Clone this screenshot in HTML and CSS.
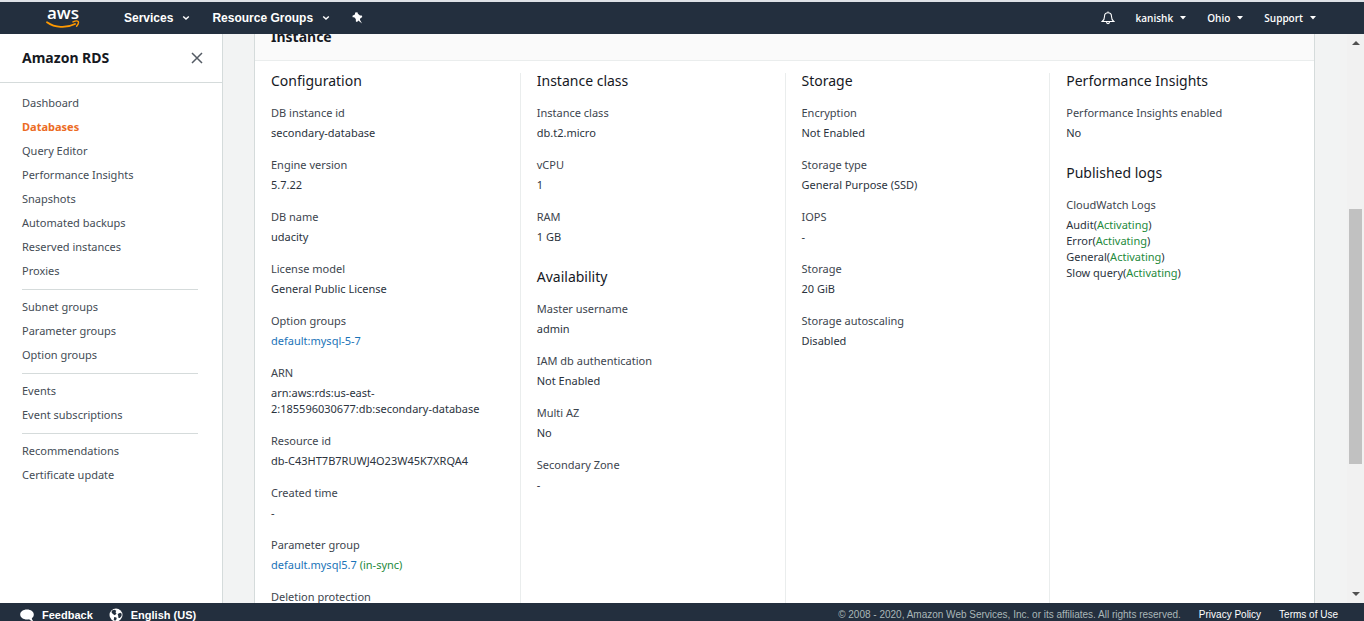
FILE: index.html
```html
<!DOCTYPE html>
<html lang="en">
<head>
<meta charset="utf-8">
<title>Amazon RDS</title>
<link rel="stylesheet" href="styles.css">
</head>
<body>
<header class="topbar">
  <a class="logo" href="#" aria-label="AWS home">
    <span class="logo-word">aws</span>
    <svg class="logo-smile" width="34" height="9" viewBox="0 0 34 9" fill="none" stroke="#f90" stroke-linecap="round" aria-hidden="true">
      <path d="M1 2.200C9 7.800 20 8.500 29 4" stroke-width="1.800"/>
      <path d="M27 1.900C29 1 31.600 .8 32.200 1.500S32 4.500 30.600 6.300" stroke-width="1.400"/>
    </svg>
  </a>
  <nav class="primary">
    <button type="button">Services <svg class="chev" viewBox="0 0 8 6"><path d="M1.200 1.500L4 4l2.800-2.500" fill="none" stroke="currentColor" stroke-width="1.500"/></svg></button>
    <button type="button">Resource Groups <svg class="chev" viewBox="0 0 8 6"><path d="M1.200 1.500L4 4l2.800-2.500" fill="none" stroke="currentColor" stroke-width="1.500"/></svg></button>
    <button type="button" aria-label="Pin shortcuts"><svg width="11" height="12" viewBox="0 0 11 12" fill="#fff"><path d="M3.200.6L5.400.3l.5 1.500L8 3.600l1.800-.2.500 1.500L8.200 6.500l-.3 1.200L10 11.400 6.300 8.600 5.100 10l-1.200-.4-.1-2.500L2.200 5.300.6 5.200.5 3.800l2.400-1.200z"/></svg></button>
  </nav>
  <nav class="secondary">
    <button type="button" aria-label="Notifications"><svg width="14" height="14" viewBox="0 0 14 14" fill="none" stroke="#fff" stroke-width="1.100"><path d="M7 .5v1.300M1.200 10.500h11.600C11 9 10.500 7.800 10.500 5.400 10.500 3 9.200 1.800 7 1.800S3.500 3 3.500 5.400C3.500 7.800 3 9 1.200 10.500zM5.500 10.800c0 2.400 3 2.400 3 0"/></svg></button>
    <button type="button">kanishk <svg class="tri" viewBox="0 0 6 4"><path d="M0 0h6L3 3.500z" fill="currentColor"/></svg></button>
    <button type="button">Ohio <svg class="tri" viewBox="0 0 6 4"><path d="M0 0h6L3 3.500z" fill="currentColor"/></svg></button>
    <button type="button">Support <svg class="tri" viewBox="0 0 6 4"><path d="M0 0h6L3 3.500z" fill="currentColor"/></svg></button>
  </nav>
</header>

<div class="workspace">
  <aside class="sidebar">
    <div class="sidebar-head">
      <h1>Amazon RDS</h1>
      <button type="button" aria-label="Close navigation"><svg width="12" height="12" viewBox="0 0 12 12" stroke="#545b64" stroke-width="1.500"><path d="M1 1l10 10M11 1L1 11"/></svg></button>
    </div>
    <nav class="side-links">
      <a href="#">Dashboard</a>
      <a href="#" class="active">Databases</a>
      <a href="#">Query Editor</a>
      <a href="#">Performance Insights</a>
      <a href="#">Snapshots</a>
      <a href="#">Automated backups</a>
      <a href="#">Reserved instances</a>
      <a href="#">Proxies</a>
      <hr>
      <a href="#">Subnet groups</a>
      <a href="#">Parameter groups</a>
      <a href="#">Option groups</a>
      <hr>
      <a href="#">Events</a>
      <a href="#">Event subscriptions</a>
      <hr>
      <a href="#">Recommendations</a>
      <a href="#">Certificate update</a>
    </nav>
  </aside>

  <main class="content">
    <section class="panel">
      <h2 class="panel-title">Instance</h2>
      <div class="columns">
        <div class="column">
          <h3>Configuration</h3>
          <dl>
            <dt>DB instance id</dt><dd>secondary-database</dd>
            <dt>Engine version</dt><dd>5.7.22</dd>
            <dt>DB name</dt><dd>udacity</dd>
            <dt>License model</dt><dd>General Public License</dd>
            <dt>Option groups</dt><dd><a href="#">default:mysql-5-7</a></dd>
            <dt>ARN</dt><dd>arn:aws:rds:us-east-<br>2:185596030677:db:secondary-database</dd>
            <dt>Resource id</dt><dd>db-C43HT7B7RUWJ4O23W45K7XRQA4</dd>
            <dt>Created time</dt><dd>-</dd>
            <dt>Parameter group</dt><dd><a href="#">default.mysql5.7</a> <span class="ok">(in-sync)</span></dd>
            <dt>Deletion protection</dt>
          </dl>
        </div>
        <div class="column">
          <h3>Instance class</h3>
          <dl>
            <dt>Instance class</dt><dd>db.t2.micro</dd>
            <dt>vCPU</dt><dd>1</dd>
            <dt>RAM</dt><dd>1 GB</dd>
          </dl>
          <h3>Availability</h3>
          <dl>
            <dt>Master username</dt><dd>admin</dd>
            <dt>IAM db authentication</dt><dd>Not Enabled</dd>
            <dt>Multi AZ</dt><dd>No</dd>
            <dt>Secondary Zone</dt><dd>-</dd>
          </dl>
        </div>
        <div class="column">
          <h3>Storage</h3>
          <dl>
            <dt>Encryption</dt><dd>Not Enabled</dd>
            <dt>Storage type</dt><dd>General Purpose (SSD)</dd>
            <dt>IOPS</dt><dd>-</dd>
            <dt>Storage</dt><dd>20 GiB</dd>
            <dt>Storage autoscaling</dt><dd>Disabled</dd>
          </dl>
        </div>
        <div class="column">
          <h3>Performance Insights</h3>
          <dl>
            <dt>Performance Insights enabled</dt><dd>No</dd>
          </dl>
          <h3>Published logs</h3>
          <dl>
            <dt>CloudWatch Logs</dt>
            <dd>Audit(<span class="ok">Activating</span>)<br>Error(<span class="ok">Activating</span>)<br>General(<span class="ok">Activating</span>)<br>Slow query(<span class="ok">Activating</span>)</dd>
          </dl>
        </div>
      </div>
    </section>
  </main>

  <div class="scrollbar" aria-hidden="true">
    <svg width="8" height="4" viewBox="0 0 8 4"><path d="M0 4h8L4 0z" fill="#505050"/></svg>
    <div class="track"><div class="thumb"></div></div>
    <svg width="8" height="4" viewBox="0 0 8 4"><path d="M0 0h8L4 4z" fill="#505050"/></svg>
  </div>
</div>

<footer class="footer">
  <button type="button"><svg width="14" height="13" viewBox="0 0 14 13" fill="#fff"><path d="M7 .5c4 0 6.800 2.200 6.800 5 0 1.600-.8 2.900-2 3.800.1 1.200.7 2.100 1.500 2.900-1.900-.1-3.300-.8-4.200-1.900-.7.200-1.400.2-2.100.2-4 0-6.800-2.200-6.800-5s2.800-5 6.800-5z"/></svg>Feedback</button>
  <button type="button"><svg width="14" height="14" viewBox="0 0 14 14"><circle cx="7" cy="7" r="6.500" fill="#fff"/><path d="M3 2.500l2.500-.8 1.800 1.100-.8 1.500 1 1.200L5.800 7.200 3.800 6 2.500 4.300zM8.700 6l2.500-1.200 1.500 1-.2 2.300-1.700 2-1.300-.2-.3-1.900zM5.200 9l2.200.6.3 1.500-1.500 1.600-1.500-.8z" fill="#232f3e"/></svg>English (US)</button>
  <p>© 2008 - 2020, Amazon Web Services, Inc. or its affiliates. All rights reserved.</p>
  <a href="#">Privacy Policy</a>
  <a href="#">Terms of Use</a>
</footer>
</body>
</html>
```
FILE: styles.css
```css
* { box-sizing: border-box; margin: 0; padding: 0; }

body {
  display: flex;
  flex-direction: column;
  height: 100vh;
  overflow: hidden;
  border-top: 2px solid #dee1e6;
  background: #f2f3f3;
  color: #16191f;
  font: 11px/16px "Noto Sans", sans-serif;
}

button {
  display: inline-flex;
  align-items: center;
  border: 0;
  background: none;
  color: inherit;
  font: inherit;
  white-space: nowrap;
  cursor: pointer;
}

a { color: #0073bb; text-decoration: none; }

/* Top bar */
.topbar {
  display: flex;
  flex: none;
  align-items: center;
  height: 32px;
  padding: 0 48px 0 46px;
  background: #232f3e;
  color: #fff;
}

.logo { width: 34px; margin-right: 44px; color: #fff; }
.logo-word { display: block; height: 13px; font: 600 17px/11px "Open Sans", sans-serif; text-align: center; }
.logo-smile { display: block; }

.primary { display: flex; gap: 22px; font: bold 12px/16px "Liberation Sans", Arial, sans-serif; }
.secondary { display: flex; gap: 21px; margin-left: auto; font: 600 10px/16px "Open Sans", sans-serif; }
.chev { width: 8px; height: 6px; margin-left: 9px; }
.tri { width: 6px; height: 4px; margin-left: 7px; }

/* Main area */
.workspace { display: flex; flex: 1; min-height: 0; }

.sidebar { flex: none; width: 223px; border-right: 1px solid #d5dbdb; background: #fff; }
.sidebar-head {
  display: flex;
  align-items: center;
  justify-content: space-between;
  height: 49px;
  padding: 0 19px 0 22px;
  border-bottom: 1px solid #d5dbdb;
}
.sidebar-head h1 { font-size: 14px; font-weight: 700; }
.side-links { display: flex; flex-direction: column; padding: 8px 24px 8px 22px; }
.side-links a { color: #444c55; line-height: 24px; }
.side-links .active { color: #ec6b24; font-weight: 700; }
.side-links hr { margin: 6px 0 5px; border: 0; border-top: 1px solid #d5dbdb; }

.content { flex: 1; min-width: 0; overflow: hidden; padding: 0 32px 0 31px; }
.panel { height: 100%; border: solid #d5dbdb; border-width: 0 1px; background: #fff; }
.panel-title {
  height: 27px;
  padding: 0 16px;
  border-bottom: 1px solid #eaeded;
  background: #fafafa;
  font-size: 14px;
  font-weight: 700;
  line-height: 6px;
}
.columns { display: grid; grid-template-columns: repeat(4, 1fr); height: 100%; padding-top: 12px; }
.column { padding: 0 16px; border-left: 1px solid #eaeded; }
.column:first-child { border-left: 0; }
.column h3 { margin-bottom: 16px; font-size: 14px; font-weight: 400; line-height: 16px; }
.column dl + h3 { margin-top: 24px; }
.column dt { margin-bottom: 4px; color: #3d454e; }
.column dd { margin-bottom: 16px; color: #2b333d; }
.column dd:last-child { margin-bottom: 0; }
.column .ok { color: #258a3c; }
.column dd a { color: #1a73b8; }

.scrollbar {
  display: flex;
  flex: none;
  flex-direction: column;
  align-items: center;
  width: 17px;
  padding: 7px 0;
  background: #f1f1f1;
}
.track { flex: 1; width: 13px; padding-top: 164px; }
.thumb { height: 67%; max-height: 255px; background: #c1c1c1; }

/* Footer */
.footer {
  display: flex;
  flex: none;
  align-items: center;
  height: 24px;
  margin-bottom: -6px;
  padding: 0 26px 0 20px;
  background: #232f3e;
  color: #fff;
  font: 10px/16px "Liberation Sans", Arial, sans-serif;
}
.footer button { gap: 8px; margin-right: 16px; font-size: 11px; font-weight: 700; }
.footer p { margin-left: auto; color: #aab7b8; }
.footer a { margin-left: 18px; color: #fff; }
```
